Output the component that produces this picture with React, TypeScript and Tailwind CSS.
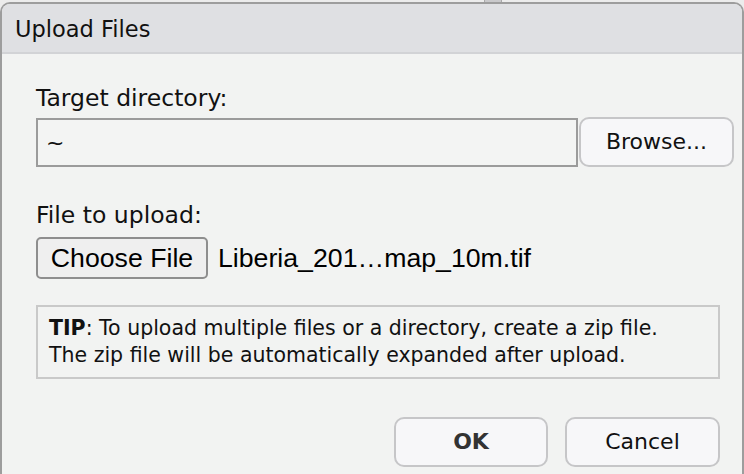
import React from "react";

const sans = "font-['DejaVu_Sans',sans-serif]";
const arial = "font-['Liberation_Sans',Arial,sans-serif]";

function DialogButton({
  label,
  bold,
  className,
}: {
  label: string;
  bold?: boolean;
  className?: string;
}) {
  return (
    <button
      type="button"
      className={`flex items-center justify-center rounded-[10px] border-2 border-[#c6c6c8] bg-[#f7f7f9] text-[22px] leading-[26px] ${
        bold ? "font-bold text-[#333]" : "text-[#111]"
      } ${className ?? ""}`}
    >
      {label}
    </button>
  );
}

export default function App() {
  return (
    <div className={`flex h-[474px] w-[744px] flex-col overflow-hidden bg-[#ececec] ${sans}`}>
      {/* sliver of the window behind */}
      <div className="flex h-[2px] shrink-0">
        <div className="ml-[484px] w-[18px] border-x border-[#a9a9a9] bg-[#c9c9cb]" />
      </div>
      <div className="flex flex-1 flex-col rounded-t-[10px] border-x-2 border-t-2 border-[#9d9d9d] bg-[#f2f3f2]">
        <header className="flex h-[50px] shrink-0 items-center rounded-t-[8px] border-b-2 border-[#d2d3d6] bg-[#dfe0e3] pl-[13px] pt-[2px]">
          <h1 className="text-[22.5px] leading-[26px] text-[#111]">Upload Files</h1>
        </header>

        <div className="flex flex-col pl-[34px] pr-[22px] pt-[31px]">
          <label className="text-[23.5px] leading-[27px] text-[#111]">Target directory:</label>
          <div className="mr-[-14px] mt-[6px] flex items-stretch">
            <div className="flex h-[49px] w-[542px] items-center border-2 border-[#9b9b9b] bg-[#f3f4f3] pl-[8px] text-[22px] text-[#111]">
              ~
            </div>
            <DialogButton label="Browse..." className="ml-[1px] h-[50px] w-[155px] -mt-[1px] text-[22.8px]" />
          </div>

          <label className="mt-[35px] text-[23.5px] leading-[27px] text-[#111]">File to upload:</label>
          <div className="mt-[8px] flex items-center">
            <button
              type="button"
              className={`flex h-[42px] w-[172px] items-center justify-center rounded-[5px] border-2 border-[#8e8e8e] bg-[#efefef] text-[26.7px] text-black ${arial}`}
            >
              Choose File
            </button>
            <span className={`ml-[10px] text-[26.7px] text-black ${arial}`}>
              Liberia_201…map_10m.tif
            </span>
          </div>

          <div className="mt-[26px] flex h-[74px] flex-col justify-center border-2 border-[#c9c9c9] pl-[11px] text-[20.5px] leading-[27px] text-[#111]">
            <p>
              <b>TIP</b>: To upload multiple files or a directory, create a zip file.
            </p>
            <p>The zip file will be automatically expanded after upload.</p>
          </div>

          <div className="mt-[38px] flex justify-end gap-[17px]">
            <DialogButton label="OK" bold className="h-[50px] w-[154px]" />
            <DialogButton label="Cancel" className="h-[50px] w-[155px]" />
          </div>
        </div>
      </div>
    </div>
  );
}
